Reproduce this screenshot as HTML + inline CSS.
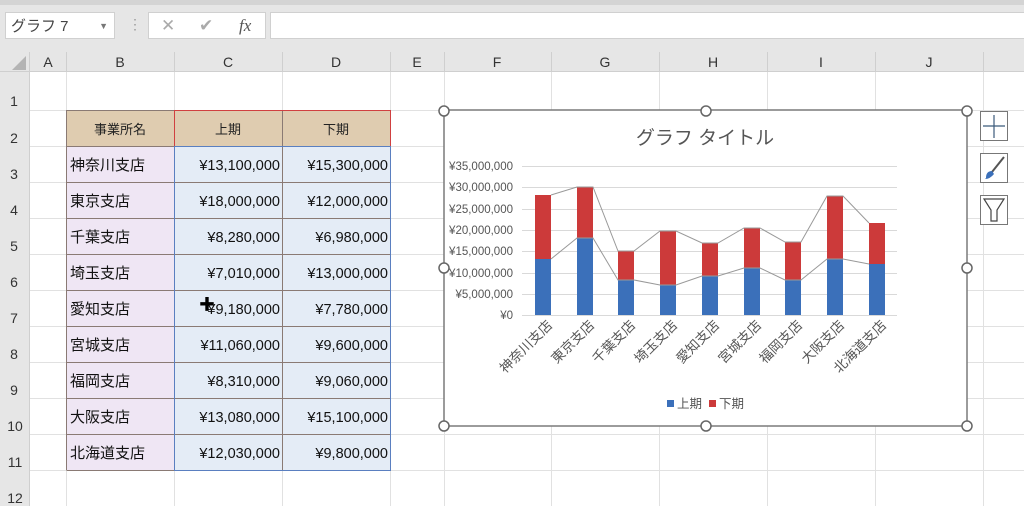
<!DOCTYPE html>
<html><head><meta charset="utf-8"><style>
body{margin:0;width:1024px;height:506px;overflow:hidden;background:#fff;font-family:"Liberation Sans","Noto Sans CJK JP",sans-serif;position:relative}
.abs{position:absolute}
</style></head><body>
<div class="abs" style="left:0;top:0;width:1024px;height:52px;background:#e6e6e6"></div>
<div class="abs" style="left:0;top:0;width:1024px;height:5px;background:#d4d4d4"></div>
<div class="abs" style="left:5px;top:12px;width:110px;height:27px;background:#fff;border:1px solid #d0d0d0;font-size:15px;color:#444;line-height:27px;text-indent:5px;box-sizing:border-box">グラフ 7<span style="position:absolute;right:6px;top:0;font-size:9px;color:#777">▼</span></div>
<div class="abs" style="left:128px;top:16px;color:#999;font-size:14px">⋮</div>
<div class="abs" style="left:148px;top:12px;width:118px;height:27px;background:#fff;border:1px solid #d0d0d0;box-sizing:border-box;color:#aaa;font-size:17px;line-height:25px"><span style="position:absolute;left:12px">✕</span><span style="position:absolute;left:50px">✔</span><span style="position:absolute;left:90px;color:#555;font-family:'Liberation Serif',serif;font-style:italic">fx</span></div>
<div class="abs" style="left:270px;top:12px;width:760px;height:27px;background:#fff;border:1px solid #d0d0d0;box-sizing:border-box"></div>
<svg class="abs" style="left:0;top:52px" width="1024" height="454">
<rect x="0" y="0" width="1024" height="20" fill="#e6e6e6"/>
<rect x="0" y="0" width="30" height="454" fill="#e6e6e6"/>
<polygon points="12,18 26,18 26,4" fill="#b4b4b4"/>
<g stroke="#e1e1e1" stroke-width="1">
<line x1="30" y1="58.5" x2="1024" y2="58.5"/><line x1="30" y1="94.5" x2="1024" y2="94.5"/><line x1="30" y1="130.5" x2="1024" y2="130.5"/><line x1="30" y1="166.5" x2="1024" y2="166.5"/><line x1="30" y1="202.5" x2="1024" y2="202.5"/><line x1="30" y1="238.5" x2="1024" y2="238.5"/><line x1="30" y1="274.5" x2="1024" y2="274.5"/><line x1="30" y1="310.5" x2="1024" y2="310.5"/><line x1="30" y1="346.5" x2="1024" y2="346.5"/><line x1="30" y1="382.5" x2="1024" y2="382.5"/><line x1="30" y1="418.5" x2="1024" y2="418.5"/>
<line x1="66.5" y1="20" x2="66.5" y2="454"/><line x1="174.5" y1="20" x2="174.5" y2="454"/><line x1="282.5" y1="20" x2="282.5" y2="454"/><line x1="390.5" y1="20" x2="390.5" y2="454"/><line x1="444.5" y1="20" x2="444.5" y2="454"/><line x1="551.5" y1="20" x2="551.5" y2="454"/><line x1="659.5" y1="20" x2="659.5" y2="454"/><line x1="767.5" y1="20" x2="767.5" y2="454"/><line x1="875.5" y1="20" x2="875.5" y2="454"/><line x1="983.5" y1="20" x2="983.5" y2="454"/>
</g>
<g stroke="#cfcfcf"><line x1="66.5" y1="0" x2="66.5" y2="20"/><line x1="174.5" y1="0" x2="174.5" y2="20"/><line x1="282.5" y1="0" x2="282.5" y2="20"/><line x1="390.5" y1="0" x2="390.5" y2="20"/><line x1="444.5" y1="0" x2="444.5" y2="20"/><line x1="551.5" y1="0" x2="551.5" y2="20"/><line x1="659.5" y1="0" x2="659.5" y2="20"/><line x1="767.5" y1="0" x2="767.5" y2="20"/><line x1="875.5" y1="0" x2="875.5" y2="20"/><line x1="983.5" y1="0" x2="983.5" y2="20"/><line x1="0" y1="19.5" x2="1024" y2="19.5"/><line x1="29.5" y1="0" x2="29.5" y2="454"/></g>
<g font-size="14" fill="#333" text-anchor="middle">
<text x="48" y="15">A</text><text x="120" y="15">B</text><text x="228" y="15">C</text><text x="336" y="15">D</text><text x="417" y="15">E</text><text x="497" y="15">F</text><text x="605" y="15">G</text><text x="713" y="15">H</text><text x="821" y="15">I</text><text x="929" y="15">J</text>
<text x="14" y="54">1</text><text x="14" y="91">2</text><text x="14" y="127">3</text><text x="14" y="163">4</text><text x="14" y="199">5</text><text x="14" y="235">6</text><text x="14" y="271">7</text><text x="14" y="307">8</text><text x="14" y="343">9</text><text x="15" y="379">10</text><text x="15" y="415">11</text><text x="15" y="451">12</text>
</g>
<rect x="67" y="59" width="323" height="35" fill="#dfccb0"/>
<rect x="67" y="95" width="107" height="323" fill="#efe6f4"/>
<rect x="175" y="95" width="215" height="323" fill="#e4ecf6"/>
<g stroke="#8a7a74"><line x1="66.5" y1="58.5" x2="390.5" y2="58.5"/><line x1="66.5" y1="94.5" x2="390.5" y2="94.5"/><line x1="66.5" y1="58" x2="66.5" y2="418"/><line x1="174.5" y1="58" x2="174.5" y2="418"/><line x1="282.5" y1="58" x2="282.5" y2="418"/><line x1="390.5" y1="58" x2="390.5" y2="418"/><line x1="66.5" y1="418.5" x2="390.5" y2="418.5"/>
<line x1="66.5" y1="130.5" x2="390.5" y2="130.5"/><line x1="66.5" y1="166.5" x2="390.5" y2="166.5"/><line x1="66.5" y1="202.5" x2="390.5" y2="202.5"/><line x1="66.5" y1="238.5" x2="390.5" y2="238.5"/><line x1="66.5" y1="274.5" x2="390.5" y2="274.5"/><line x1="66.5" y1="310.5" x2="390.5" y2="310.5"/><line x1="66.5" y1="346.5" x2="390.5" y2="346.5"/><line x1="66.5" y1="382.5" x2="390.5" y2="382.5"/></g>
<rect x="174.5" y="58.5" width="216" height="36" fill="none" stroke="#d04040"/>
<rect x="174.5" y="94.5" width="216" height="324" fill="none" stroke="#5a7fc0"/>
<g font-size="13" fill="#222" text-anchor="middle"><text x="120" y="82">事業所名</text><text x="228" y="82">上期</text><text x="336" y="82">下期</text></g>
<g font-size="15" fill="#111">
<text x="70" y="118">神奈川支店</text><text x="70" y="154">東京支店</text><text x="70" y="190">千葉支店</text><text x="70" y="226">埼玉支店</text><text x="70" y="262">愛知支店</text><text x="70" y="298">宮城支店</text><text x="70" y="334">福岡支店</text><text x="70" y="370">大阪支店</text><text x="70" y="406">北海道支店</text>
</g>
<g font-size="14.5" fill="#111" text-anchor="end">
<text x="280" y="118">¥13,100,000</text><text x="280" y="154">¥18,000,000</text><text x="280" y="190">¥8,280,000</text><text x="280" y="226">¥7,010,000</text><text x="280" y="262">¥9,180,000</text><text x="280" y="298">¥11,060,000</text><text x="280" y="334">¥8,310,000</text><text x="280" y="370">¥13,080,000</text><text x="280" y="406">¥12,030,000</text>
<text x="388" y="118">¥15,300,000</text><text x="388" y="154">¥12,000,000</text><text x="388" y="190">¥6,980,000</text><text x="388" y="226">¥13,000,000</text><text x="388" y="262">¥7,780,000</text><text x="388" y="298">¥9,600,000</text><text x="388" y="334">¥9,060,000</text><text x="388" y="370">¥15,100,000</text><text x="388" y="406">¥9,800,000</text>
</g>
<text x="199" y="258" font-size="16">✚</text>
</svg>
<svg class="abs" style="left:0;top:0" width="1024" height="506">
<rect x="444" y="110" width="523" height="316" fill="#fff" stroke="#7a7a7a" stroke-width="1.5"/>
<text x="705" y="144" font-size="19" fill="#555" text-anchor="middle">グラフ タイトル</text>
<g stroke="#d9d9d9"><line x1="522" y1="166.5" x2="897" y2="166.5"/><line x1="522" y1="187.5" x2="897" y2="187.5"/><line x1="522" y1="209.5" x2="897" y2="209.5"/><line x1="522" y1="230.5" x2="897" y2="230.5"/><line x1="522" y1="251.5" x2="897" y2="251.5"/><line x1="522" y1="273.5" x2="897" y2="273.5"/><line x1="522" y1="294.5" x2="897" y2="294.5"/><line x1="522" y1="315.5" x2="897" y2="315.5"/></g>
<g font-size="11.5" fill="#555" text-anchor="end"><text x="513" y="170">¥35,000,000</text><text x="513" y="191">¥30,000,000</text><text x="513" y="213">¥25,000,000</text><text x="513" y="234">¥20,000,000</text><text x="513" y="255">¥15,000,000</text><text x="513" y="277">¥10,000,000</text><text x="513" y="298">¥5,000,000</text><text x="513" y="319">¥0</text></g>
<g fill="#3b70ba">
<rect x="535" y="259" width="16" height="56"/><rect x="577" y="238" width="16" height="77"/><rect x="618" y="280" width="16" height="35"/><rect x="660" y="285" width="16" height="30"/><rect x="702" y="276" width="16" height="39"/><rect x="744" y="268" width="16" height="47"/><rect x="785" y="280" width="16" height="35"/><rect x="827" y="259" width="16" height="56"/><rect x="869" y="264" width="16" height="51"/></g>
<g fill="#cc3a3a">
<rect x="535" y="195" width="16" height="64"/><rect x="577" y="187" width="16" height="51"/><rect x="618" y="251" width="16" height="29"/><rect x="660" y="231" width="16" height="54"/><rect x="702" y="243" width="16" height="33"/><rect x="744" y="228" width="16" height="40"/><rect x="785" y="242" width="16" height="38"/><rect x="827" y="196" width="16" height="63"/><rect x="869" y="223" width="16" height="41"/></g>
<g fill="none" stroke="#999" stroke-width="1"><polyline points="551,259 577,238 593,238 618,280 634,280 660,285 676,285 702,276 718,276 744,268 760,268 785,280 801,280 827,259 843,259 869,264"/><polyline points="551,195 577,187 593,187 618,251 634,251 660,231 676,231 702,243 718,243 744,228 760,228 785,242 801,242 827,196 843,196 869,223"/></g>
<g font-size="13.5" fill="#555" text-anchor="end">
<text transform="translate(553,326) rotate(-45)">神奈川支店</text><text transform="translate(595,326) rotate(-45)">東京支店</text><text transform="translate(636,326) rotate(-45)">千葉支店</text><text transform="translate(678,326) rotate(-45)">埼玉支店</text><text transform="translate(720,326) rotate(-45)">愛知支店</text><text transform="translate(762,326) rotate(-45)">宮城支店</text><text transform="translate(803,326) rotate(-45)">福岡支店</text><text transform="translate(845,326) rotate(-45)">大阪支店</text><text transform="translate(887,326) rotate(-45)">北海道支店</text></g>
<rect x="667" y="400" width="7" height="7" fill="#3b70ba"/><text x="677" y="408" font-size="12.5" fill="#555">上期</text>
<rect x="709" y="400" width="7" height="7" fill="#cc3a3a"/><text x="719" y="408" font-size="12.5" fill="#555">下期</text>
<g fill="#fff" stroke="#666" stroke-width="1.5"><circle cx="444" cy="111" r="5"/><circle cx="706" cy="111" r="5"/><circle cx="967" cy="111" r="5"/><circle cx="444" cy="268" r="5"/><circle cx="967" cy="268" r="5"/><circle cx="444" cy="426" r="5"/><circle cx="706" cy="426" r="5"/><circle cx="967" cy="426" r="5"/></g>
<g fill="#fff" stroke="#777"><rect x="980.5" y="111.5" width="27" height="29"/><rect x="980.5" y="153.5" width="27" height="29"/><rect x="980.5" y="195.5" width="27" height="29"/></g>
<g stroke="#3b5a7a" stroke-width="1.2"><line x1="994" y1="115" x2="994" y2="138"/><line x1="983" y1="126" x2="1005" y2="126"/></g>
<path d="M1004,157 L992,172" stroke="#555" stroke-width="2"/><path d="M986,178 Q986,171 992,171 L994,174 Q990,179 985,179Z" fill="#3b70ba"/>
<path d="M984,199 L1004,199 L997,210 L997,221 L991,221 L991,210Z" fill="none" stroke="#444" stroke-width="1.2"/>
</svg>
</body></html>
